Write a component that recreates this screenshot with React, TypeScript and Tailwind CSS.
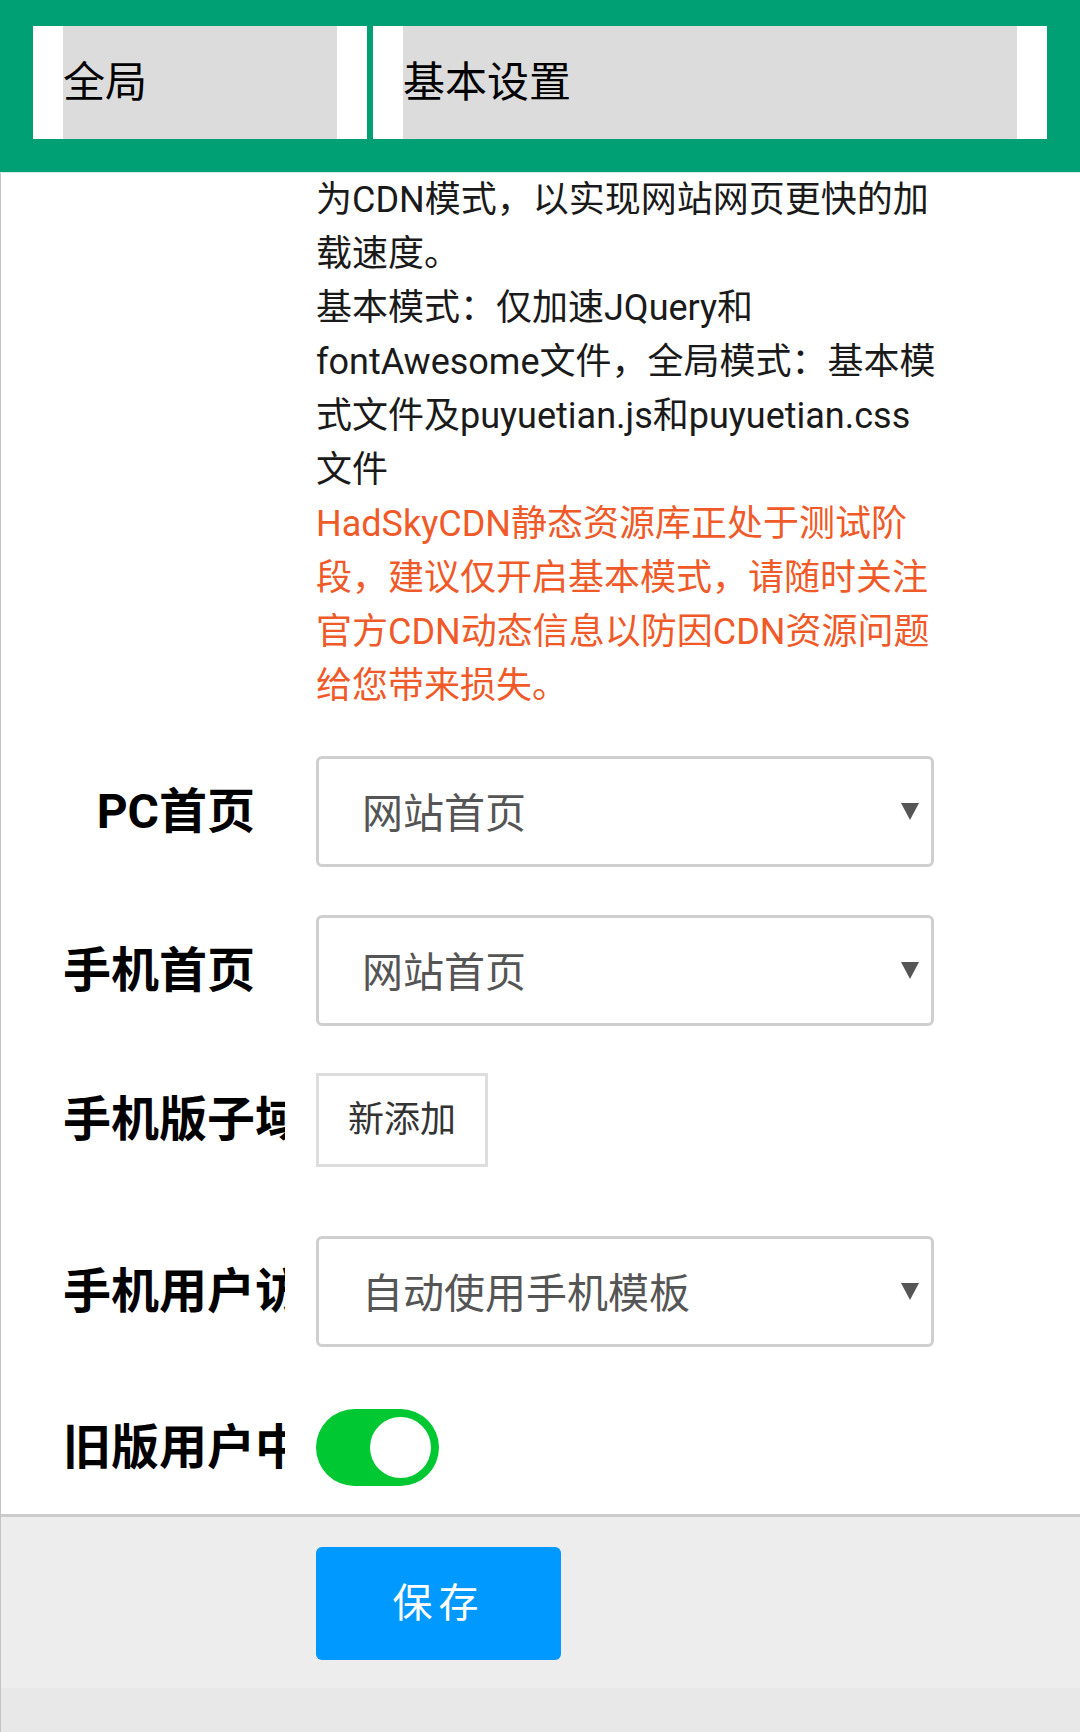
import React from "react";

const FONT = { fontFamily: 'Roboto, "Noto Sans CJK SC", "Noto Sans", sans-serif' } as const;

function Arrow() {
  return (
    <svg width="18" height="17" viewBox="0 0 18 17" className="shrink-0">
      <polygon points="0,0 18,0 9,17" fill="#555555" />
    </svg>
  );
}

function Row({ label, children, className = "" }: { label: string; children: React.ReactNode; className?: string }) {
  return (
    <div className={"flex items-center " + className}>
      <div className="w-[284px] shrink-0 pl-[62px] pr-[30px] overflow-hidden whitespace-nowrap text-right text-[48px] font-bold text-black leading-normal">
        {label}
      </div>
      <div className="ml-[31px]">{children}</div>
    </div>
  );
}

function Select({ value }: { value: string }) {
  return (
    <div className="w-[618px] h-[111px] border-[3px] border-[#cfcfcf] rounded-[6px] bg-white flex items-center justify-between pl-[43px] pr-[12px]">
      <span className="text-[41px] text-[#555555] leading-none pt-[6px]">{value}</span>
      <Arrow />
    </div>
  );
}

export default function App() {
  const black = [
    "为CDN模式，以实现网站网页更快的加",
    "载速度。",
    "基本模式：仅加速JQuery和",
    "fontAwesome文件，全局模式：基本模",
    "式文件及puyuetian.js和puyuetian.css",
    "文件",
  ];
  const red = [
    "HadSkyCDN静态资源库正处于测试阶",
    "段，建议仅开启基本模式，请随时关注",
    "官方CDN动态信息以防因CDN资源问题",
    "给您带来损失。",
  ];
  return (
    <div className="w-[1080px] h-[1732px] overflow-hidden bg-white flex flex-col" style={FONT}>
      <div className="h-[172px] shrink-0 bg-[#009f74] flex gap-[6px] px-[33px] pt-[26px]">
        <div className="w-[334px] h-[113px] bg-white px-[30px]">
          <div className="h-full bg-[#dcdcdc] flex items-center text-[42px] text-black">全局</div>
        </div>
        <div className="w-[674px] h-[113px] bg-white px-[30px]">
          <div className="h-full bg-[#dcdcdc] flex items-center text-[42px] text-black">基本设置</div>
        </div>
      </div>
      <div className="h-[1px] shrink-0 bg-[#cdeee4]" />
      <div className="flex-1 flex flex-col border-l border-[#c4c4c4]">
        <div className="flex flex-col">
          <div className="ml-[315px] text-[36px] leading-[54px] whitespace-nowrap">
            {black.map((l) => (
              <div key={l} className="text-[#1a1a1a]">{l}</div>
            ))}
            {red.map((l) => (
              <div key={l} className="text-[#f05a28]">{l}</div>
            ))}
          </div>
          <Row label="PC首页" className="mt-[43px]">
            <Select value="网站首页" />
          </Row>
          <Row label="手机首页" className="mt-[48px]">
            <Select value="网站首页" />
          </Row>
          <Row label="手机版子域名" className="mt-[47px]">
            <div className="w-[172px] h-[94px] border-[3px] border-[#dddddd] bg-white flex items-center justify-center text-[36px] text-[#333333]">
              新添加
            </div>
          </Row>
          <Row label="手机用户访问" className="mt-[69px]">
            <Select value="自动使用手机模板" />
          </Row>
          <Row label="旧版用户中心" className="mt-[62px]">
            <div className="w-[123px] h-[77px] rounded-full bg-[#00c832] flex items-center justify-end pr-[8px]">
              <div className="w-[61px] h-[61px] rounded-full bg-white" />
            </div>
          </Row>
        </div>
        <div className="mt-[28px] border-t-[3px] border-[#cccccc] bg-[#ededed] pt-[30px] pb-[28px]">
          <div className="ml-[315px] w-[245px] h-[113px] rounded-[6px] bg-[#0099ff] flex items-center justify-center text-white text-[40px] tracking-[6px]">
            保存
          </div>
        </div>
        <div className="flex-1 bg-[#e8e8e8]" />
      </div>
    </div>
  );
}
